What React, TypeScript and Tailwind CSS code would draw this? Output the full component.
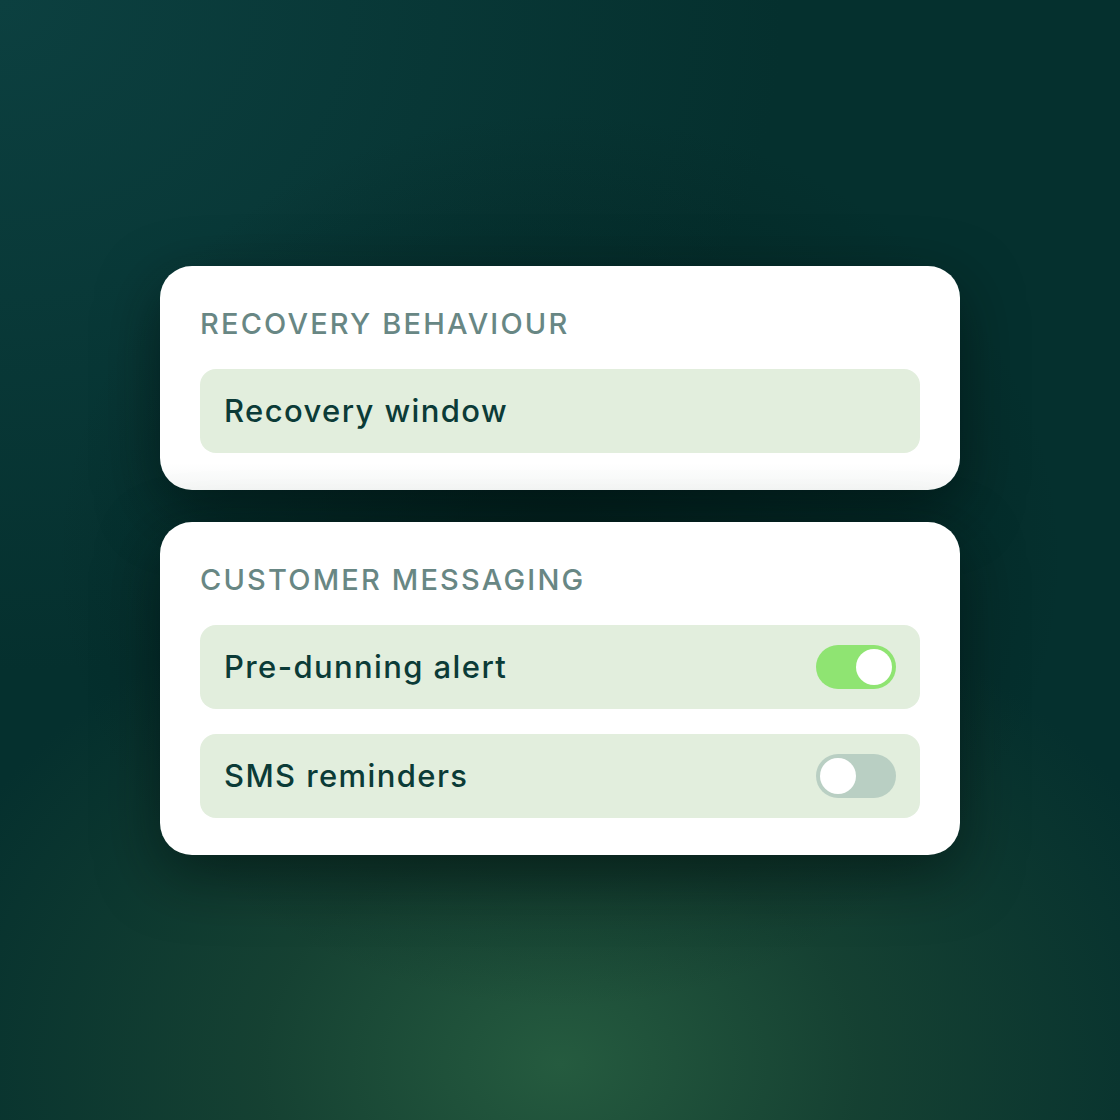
import React from "react";

function Toggle({ on }: { on: boolean }) {
  return (
    <div
      className={
        on
          ? "flex h-[44px] w-[80px] items-center justify-end rounded-full bg-[#8fe472] px-[4px]"
          : "flex h-[44px] w-[80px] items-center justify-start rounded-full bg-[#b9cfc3] px-[4px]"
      }
    >
      <div className="h-[36px] w-[36px] rounded-full bg-white" />
    </div>
  );
}

function Row({ label, toggle }: { label: string; toggle?: boolean }) {
  return (
    <div className="flex h-[84px] items-center justify-between rounded-2xl bg-[#e2eedd] px-6">
      <span className="text-[31px] font-medium leading-none tracking-[0.045em] text-[#0b3b37]">{label}</span>
      {toggle !== undefined && <Toggle on={toggle} />}
    </div>
  );
}

function Card({ title, fade, children }: { title: string; fade?: boolean; children: React.ReactNode }) {
  return (
    <div
      className={
        fade
          ? "flex w-[800px] flex-col gap-6 rounded-[32px] bg-gradient-to-b from-white from-88% to-[#f5f7f6] px-10 pb-[37px] pt-[36px] shadow-[0_20px_60px_rgba(0,15,12,0.55)]"
          : "flex w-[800px] flex-col gap-6 rounded-[32px] bg-white px-10 pb-[37px] pt-[36px] shadow-[0_20px_60px_rgba(0,15,12,0.55)]"
      }
    >
      <div className="text-[29px] font-medium uppercase leading-[43px] tracking-[0.075em] text-[#688784]">
        {title}
      </div>
      <div className="flex flex-col gap-[25px]">{children}</div>
    </div>
  );
}

export default function App() {
  return (
    <div
      className="relative flex h-[1120px] w-[1120px] flex-col items-center justify-center gap-8 overflow-hidden bg-[#05302e]"
      style={{ fontFamily: "Inter, 'Noto Sans', sans-serif" }}
    >
      <div className="pointer-events-none absolute inset-0 bg-[radial-gradient(ellipse_70%_60%_at_0%_0%,#0c4040_0%,rgba(8,58,58,0)_100%)]" />
      <div className="pointer-events-none absolute inset-0 bg-[radial-gradient(ellipse_60%_45%_at_50%_95%,#255b3f_0%,rgba(28,72,52,0.7)_45%,rgba(5,48,46,0)_100%)]" />
      <div className="pointer-events-none absolute inset-0 bg-[radial-gradient(ellipse_45%_40%_at_50%_50%,rgba(3,30,28,0.8)_0%,rgba(3,30,28,0)_100%)]" />
      <div className="relative flex flex-col gap-8">
        <Card title="Recovery Behaviour" fade>
          <Row label="Recovery window" />
        </Card>
        <Card title="Customer Messaging">
          <Row label="Pre-dunning alert" toggle={true} />
          <Row label="SMS reminders" toggle={false} />
        </Card>
      </div>
    </div>
  );
}
